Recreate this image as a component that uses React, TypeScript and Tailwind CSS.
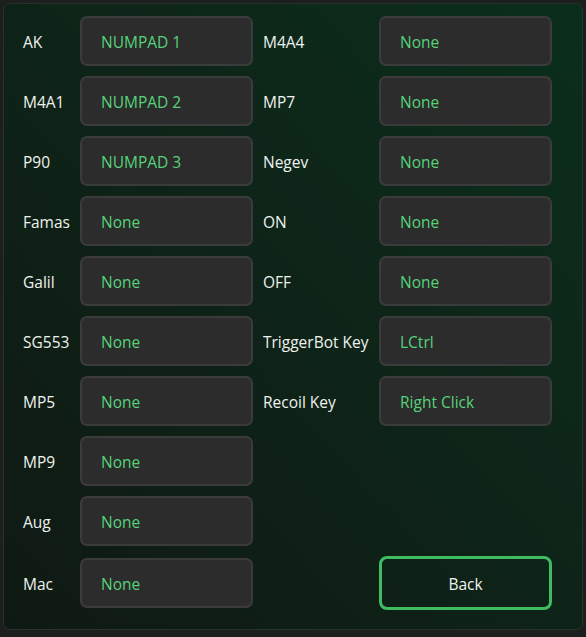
import { FC } from 'react';

const left = [
  ['AK', 'NUMPAD 1'],
  ['M4A1', 'NUMPAD 2'],
  ['P90', 'NUMPAD 3'],
  ['Famas', 'None'],
  ['Galil', 'None'],
  ['SG553', 'None'],
  ['MP5', 'None'],
  ['MP9', 'None'],
  ['Aug', 'None'],
];

const right = [
  ['M4A4', 'None'],
  ['MP7', 'None'],
  ['Negev', 'None'],
  ['ON', 'None'],
  ['OFF', 'None'],
  ['TriggerBot Key', 'LCtrl'],
  ['Recoil Key', 'Right Click'],
];

const KeyBox: FC<{ value: string }> = ({ value }) => (
  <div className="w-[173px] h-[50px] shrink-0 flex items-center pl-[19px] pt-[3px] rounded-[7px] border-2 border-[#3b3b3b] bg-[#2c2c2c] text-[#56d37a]">
    {value}
  </div>
);

const Row: FC<{ label: string; value: string; labelW: string }> = ({
  label,
  value,
  labelW,
}) => (
  <div className="flex items-center h-[50px]">
    <div className={`${labelW} shrink-0 pt-[3px] text-[#eef2ee]`}>{label}</div>
    <KeyBox value={value} />
  </div>
);

const App: FC = () => {
  return (
    <div
      className="w-[586px] h-[637px] bg-[#1d1f1e] pt-[3px] px-[3px] pb-[7px]"
      style={{ fontFamily: '"Open Sans", "Noto Sans", sans-serif' }}
    >
      <div className="h-full rounded-[7px] border border-[#26332b] bg-linear-to-bl from-[#0a2e1c] to-[#0f1913] pt-[12px] pl-[19px] text-[15.5px]">
        <div className="flex gap-[10px]">
          <div className="flex flex-col gap-[10px]">
            {left.map(([l, v]) => (
              <Row key={l} label={l} value={v} labelW="w-[57px]" />
            ))}
            <div className="flex items-center h-[54px]">
              <div className="w-[57px] shrink-0 pt-[3px] text-[#eef2ee]">Mac</div>
              <KeyBox value="None" />
            </div>
          </div>
          <div className="flex flex-col gap-[10px]">
            {right.map(([l, v]) => (
              <Row key={l} label={l} value={v} labelW="w-[116px]" />
            ))}
            <div className="flex-1" />
            <div className="flex h-[54px]">
              <div className="w-[116px] shrink-0" />
              <button className="w-[173px] h-[54px] pt-[3px] rounded-[8px] border-[3px] border-[#3fbc62] text-[#eef2ee]">
                Back
              </button>
            </div>
          </div>
        </div>
      </div>
    </div>
  );
};

export default App;
